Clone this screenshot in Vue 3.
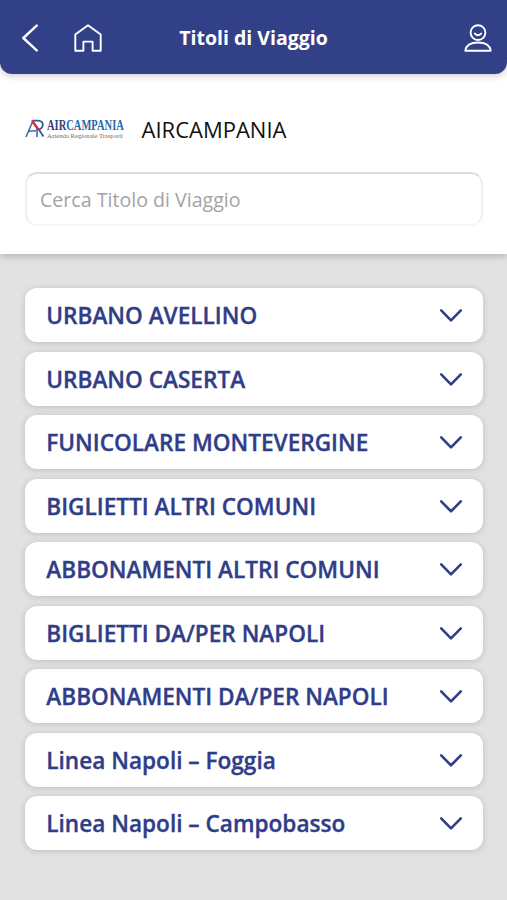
<script setup>
const groups = [
  'URBANO AVELLINO',
  'URBANO CASERTA',
  'FUNICOLARE MONTEVERGINE',
  'BIGLIETTI ALTRI COMUNI',
  'ABBONAMENTI ALTRI COMUNI',
  'BIGLIETTI DA/PER NAPOLI',
  'ABBONAMENTI DA/PER NAPOLI',
  'Linea Napoli – Foggia',
  'Linea Napoli – Campobasso',
]
</script>

<template>
  <div class="screen">
    <header class="bar">
      <div class="left">
        <button class="icon" aria-label="Indietro">
          <svg width="18" height="28" viewBox="0 0 18 28"><path d="M15.7 1.6 2.3 14l13.4 12.4" stroke-width="2.4" /></svg>
        </button>
        <button class="icon" aria-label="Home">
          <svg width="28" height="28" viewBox="0 0 28 28"><path d="M14 1.3 26.7 10.6v16.1h-8.1v-9.1H9.4v9.1H1.3V10.6Z" stroke-width="1.9" /></svg>
        </button>
      </div>
      <h1 class="title">Titoli di Viaggio</h1>
      <button class="icon profile" aria-label="Profilo">
        <svg width="28" height="28" viewBox="0 0 28 28">
          <circle cx="14" cy="8.6" r="7.4" stroke-width="1.9" />
          <path d="M10.8 9.6c1.3 2.1 5.1 2.1 6.4 0M1.3 26.7c.8-5.2 5.6-8.2 12.7-8.2s11.9 3 12.7 8.2Z" stroke-width="1.9" />
        </svg>
      </button>
    </header>

    <section class="top">
      <div class="company">
        <div class="logo">
          <svg class="mark" width="20" height="19" viewBox="0 0 20 19" fill="none">
            <path d="M1 18 7.5 3M3.5 12.5c3-.9 5-.9 7.5-.5M12 7v11" stroke="#3973a9" stroke-width="1.6" />
            <path d="M8 1.6h5c6.8 0 6 8.2 0 8.8M13.8 10.5l4.7 7" stroke="#35568f" stroke-width="1.8" />
            <path d="m7 1.4 6.5 9.6" stroke="#d72b3d" stroke-width="2.4" />
          </svg>
          <div class="wordmark">
            <span class="brand"><span class="air">AIR</span>CAMPANIA</span>
            <span class="tagline">Azienda Regionale Trasporti</span>
          </div>
        </div>
        <span class="name">AIRCAMPANIA</span>
      </div>
      <input class="search" type="text" placeholder="Cerca Titolo di Viaggio" />
    </section>

    <main class="list">
      <button v-for="group in groups" :key="group" class="card">
        <span class="label">{{ group }}</span>
        <svg class="chevron" width="24" height="15" viewBox="0 0 24 15"><path d="m2.2 2.4 9.8 9.9 9.8-9.9" /></svg>
      </button>
    </main>
  </div>
</template>

<style>
body {
  margin: 0;
  background: #e2e2e2;
}
</style>

<style scoped>
.screen {
  height: 900px;
  overflow: hidden;
  display: flex;
  flex-direction: column;
  background: #e2e2e2;
  font-family: "Open Sans", sans-serif;
}
button {
  border: 0;
  margin: 0;
  font-family: inherit;
  text-align: left;
}
.bar {
  box-sizing: border-box;
  height: 74px;
  flex: none;
  display: grid;
  grid-template-columns: 1fr auto 1fr;
  align-items: center;
  padding: 2px 15px 0;
  background: #324087;
  border-radius: 0 0 12px 12px;
  box-shadow: 0 2px 7px rgba(0, 0, 0, 0.2);
  z-index: 1;
}
.left {
  display: flex;
  gap: 35px;
  padding-left: 6px;
}
.icon {
  display: flex;
  padding: 0;
  background: none;
}
.icon svg {
  fill: none;
  stroke: #fff;
  stroke-linecap: round;
  stroke-linejoin: round;
}
.profile {
  justify-self: end;
}
.title {
  margin: 0;
  color: #fff;
  font-size: 19.5px;
  font-weight: 700;
  line-height: 26px;
}
.top {
  box-sizing: border-box;
  height: 192px;
  flex: none;
  margin-top: -12px;
  padding: 53px 24.5px 0;
  background: #fff;
  box-shadow: 0 2px 7px rgba(0, 0, 0, 0.22);
}
.company {
  height: 28px;
  display: flex;
  align-items: center;
}
.logo {
  width: 117px;
  flex: none;
  display: flex;
  align-items: center;
  gap: 2.5px;
}
.mark {
  flex: none;
  margin-bottom: 2px;
}
.wordmark {
  width: 78px;
  display: flex;
  flex-direction: column;
  align-items: flex-start;
  white-space: nowrap;
  font-family: "Liberation Serif", serif;
}
.brand {
  color: #2869aa;
  font-size: 14px;
  font-weight: 700;
  line-height: 11px;
  transform: scaleX(0.75);
  transform-origin: left;
}
.air {
  color: #30427f;
}
.tagline {
  color: #6c6c6c;
  font-size: 6.6px;
  line-height: 7px;
  padding-top: 1px;
}
.name {
  color: #111;
  font-size: 22px;
  line-height: 28px;
}
.search {
  box-sizing: border-box;
  display: block;
  width: 100%;
  height: 54px;
  margin-top: 29px;
  padding: 1px 13px 0 13.5px;
  border: 2px solid;
  border-color: #dedede #efefef #f7f7f7;
  border-radius: 12px;
  background: #fff;
  outline: 0;
  font-family: inherit;
  font-size: 19.6px;
}
.search::placeholder {
  color: #a3a3a3;
  opacity: 1;
}
.list {
  display: flex;
  flex-direction: column;
  gap: 9.55px;
  padding: 34px 24.5px 0;
}
.card {
  box-sizing: border-box;
  height: 54px;
  flex: none;
  display: flex;
  align-items: center;
  justify-content: space-between;
  padding: 0 20px 0 21.8px;
  border-radius: 12px;
  background: #fff;
  box-shadow: 0 1px 6px rgba(0, 0, 0, 0.17);
}
.label {
  color: #303d88;
  font-size: 22.6px;
  font-weight: 600;
  line-height: 30px;
  padding-top: 2px;
  -webkit-text-stroke: 0.35px #303d88;
}
.chevron {
  fill: none;
  stroke: #303d88;
  stroke-width: 2.6;
  stroke-linecap: round;
  stroke-linejoin: round;
  margin-top: 1px;
}
</style>
